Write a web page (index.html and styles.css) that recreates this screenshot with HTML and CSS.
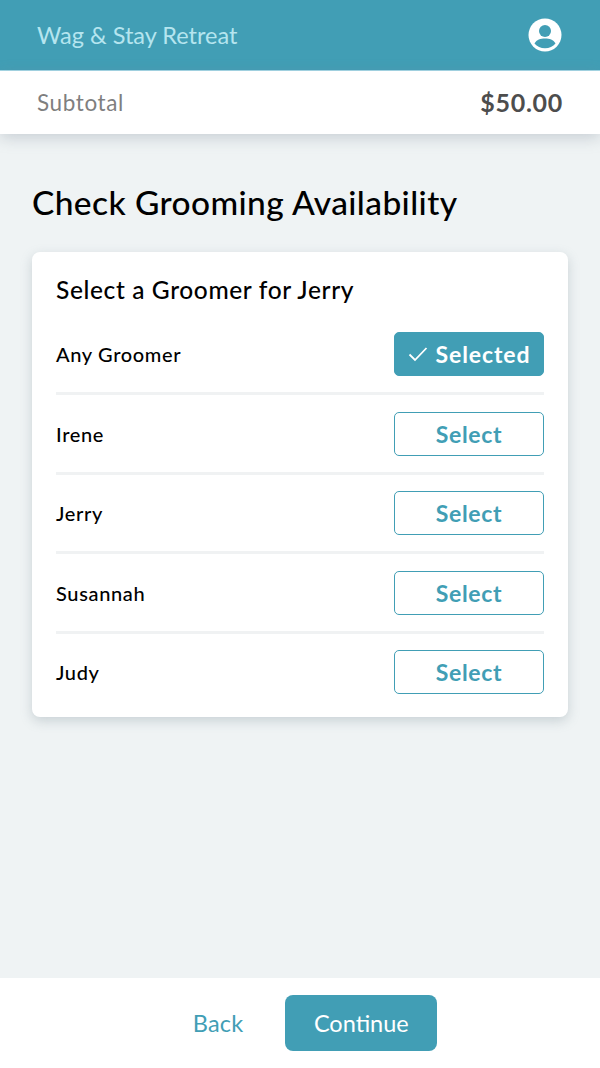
FILE: index.html
```html
<!DOCTYPE html>
<html lang="en">
<head>
<meta charset="utf-8">
<title>Check Grooming Availability</title>
<link rel="stylesheet" href="styles.css">
</head>
<body>
<div class="page">
  <header class="topbar">
    <span class="brand">Wag &amp; Stay Retreat</span>
    <svg class="avatar" viewBox="0 0 34 34" width="34" height="34" aria-hidden="true">
      <circle cx="17" cy="17" r="16.5" fill="#fff"/>
      <circle cx="17" cy="13" r="6" fill="#419eb5"/>
      <path d="M6.5 25.5C8.5 21.8 12.5 20.6 17 20.6s8.500 1.200 10.500 4.900C25 28.600 21.300 30.200 17 30.200S9 28.600 6.500 25.500Z" fill="#419eb5"/>
    </svg>
  </header>
  <section class="subtotal">
    <span class="subtotal-label">Subtotal</span>
    <span class="subtotal-value">$50.00</span>
  </section>
  <main class="content">
    <h1 class="title">Check Grooming Availability</h1>
    <section class="card">
      <h2 class="card-title">Select a Groomer for Jerry</h2>
      <div class="row">
        <span class="name">Any Groomer</span>
        <button class="btn btn-selected">
          <svg class="check" viewBox="0 0 20 16" width="20" height="16" aria-hidden="true"><path d="M1.500 8.500L7 14L18.500 2" fill="none" stroke="#fff" stroke-width="1.800"/></svg>
          Selected
        </button>
      </div>
      <div class="row">
        <span class="name">Irene</span>
        <button class="btn">Select</button>
      </div>
      <div class="row">
        <span class="name">Jerry</span>
        <button class="btn">Select</button>
      </div>
      <div class="row">
        <span class="name">Susannah</span>
        <button class="btn">Select</button>
      </div>
      <div class="row">
        <span class="name">Judy</span>
        <button class="btn">Select</button>
      </div>
    </section>
  </main>
  <footer class="footer">
    <button class="back">Back</button>
    <button class="continue">Continue</button>
  </footer>
</div>
</body>
</html>
```
FILE: styles.css
```css
* { box-sizing: border-box; }
html, body { margin: 0; height: 100%; }
body { font-family: "Lato", "Open Sans", sans-serif; background: #eff3f4; color: #000; }
button { font-family: inherit; cursor: pointer; }
.page { height: 1068px; display: flex; flex-direction: column; overflow: hidden; }
.topbar {
  height: 71px; flex: none; background: #419eb5; border-bottom: 1px solid #a5d8e6;
  display: flex; align-items: center; justify-content: space-between;
  padding: 0 39px 0 37px;
}
.brand { font-size: 23.500px; color: #b5e5ef; letter-spacing: 0; }
.avatar { display: block; margin-right: -1px; }
.subtotal {
  height: 63px; flex: none; background: #fff; position: relative;
  display: flex; align-items: center; justify-content: space-between;
  padding: 0 37px 1px;
  box-shadow: 0 4px 14px rgba(120, 135, 150, 0.32);
}
.subtotal-label { font-size: 22.500px; color: #7f7f7f; letter-spacing: 0.600px; }
.subtotal-value { font-size: 25px; font-weight: 700; color: #4d4d4d; letter-spacing: 0.700px; }
.content { flex: 1; padding: 46px 32px 0; }
.title { margin: 0 0 28px; font-size: 33.500px; line-height: 44px; font-weight: 500; letter-spacing: 0.400px; }
.card {
  background: #fff; border-radius: 8px; padding: 22px 24px 23px;
  box-shadow: 0 4px 12px rgba(120, 140, 150, 0.32);
}
.card-title { margin: 0 0 26px; font-size: 24.500px; line-height: 32px; font-weight: 500; letter-spacing: 0.620px; }
.row {
  display: flex; align-items: center; justify-content: space-between;
  padding-bottom: 16px; margin-bottom: 16.500px; border-bottom: 3px solid #f0f2f3;
}
.row:last-child { border-bottom: 0; margin-bottom: 0; padding-bottom: 0; }
.name { font-size: 20px; font-weight: 500; letter-spacing: 0.650px; }
.btn {
  width: 150px; height: 44px; border-radius: 5px; border: 1px solid #419eb5;
  background: #fff; color: #419eb5; font-size: 23px; font-weight: 700; letter-spacing: 0.650px;
  display: flex; align-items: center; justify-content: center; gap: 8px; padding: 0;
}
.btn-selected { background: #419eb5; color: #fff; letter-spacing: 0.900px; }
.check { display: block; }
.footer {
  height: 90px; flex: none; background: #fff;
  display: flex; align-items: center; justify-content: center; gap: 42px;
  padding-left: 30px;
}
.back { border: 0; background: none; padding: 0; color: #419eb5; font-size: 23.500px; letter-spacing: 0.200px; }
.continue {
  width: 152px; height: 56px; border: 0; border-radius: 8px;
  background: #419eb5; color: #fff; font-size: 23.500px; letter-spacing: 0;
}
```
